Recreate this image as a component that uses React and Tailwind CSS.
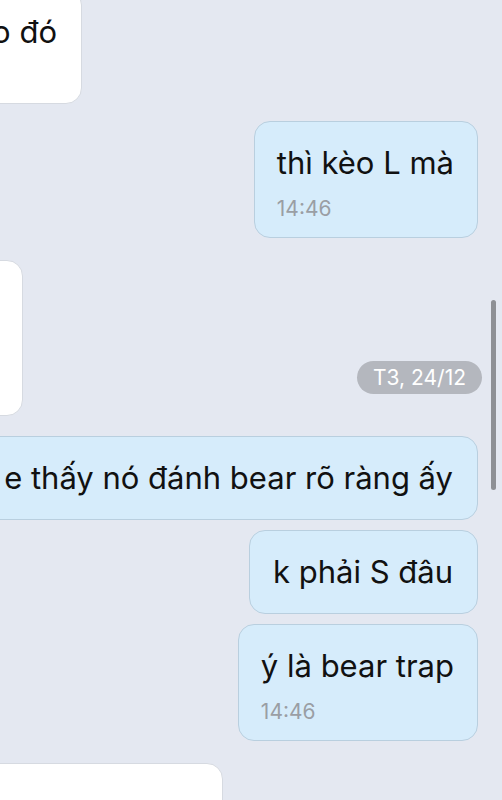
export default function App() {
  const font = { fontFamily: 'Inter, "Noto Sans", sans-serif' };
  return (
    <div
      className="relative w-full h-[800px] overflow-hidden bg-[#e4e8f1] flex flex-col pr-[24px] text-[#111111]"
      style={font}
    >
      {/* top white bubble (cut off left) */}
      <div className="flex justify-start">
        <div className="-mt-[11px] -ml-[218px] w-[300px] shrink-0 bg-white border border-[#d6dae1] rounded-[16px] pt-[22px] pb-[51px] pr-[24px] text-right text-[31px] leading-[40px]">
          o đó
        </div>
      </div>

      {/* thì kèo L mà */}
      <div className="flex justify-end mt-[17px]">
        <div className="bg-[#d6ecfb] border border-[#b9cfdf] rounded-[16px] pt-[21px] pb-[16px] pl-[22px] pr-[23px]">
          <div className="text-[31px] leading-[40px] whitespace-nowrap">thì kèo L mà</div>
          <div className="mt-[14px] text-[21px] leading-[24px] text-[#9a9ea4]">14:46</div>
        </div>
      </div>

      {/* white bubble + date pill */}
      <div className="flex justify-between mt-[22px]">
        <div className="-ml-[77px] w-[100px] h-[156px] shrink-0 bg-white border border-[#d6dae1] rounded-[16px]" />
        <div className="self-end mb-[22px] -mr-[4px] h-[33px] px-[16px] rounded-full bg-[#b4b7be] text-white text-[21px] leading-[33px] whitespace-nowrap">
          T3, 24/12
        </div>
      </div>

      {/* e thấy nó ... */}
      <div className="flex justify-end mt-[20px]">
        <div className="shrink-0 bg-[#d6ecfb] border border-[#b9cfdf] rounded-[16px] py-[21px] pl-[23px] pr-[24px] text-[31px] leading-[40px] whitespace-nowrap">
          e thấy nó đánh bear rõ ràng ấy
        </div>
      </div>

      {/* k phải S đâu */}
      <div className="flex justify-end mt-[10px]">
        <div className="bg-[#d6ecfb] border border-[#b9cfdf] rounded-[16px] py-[21px] pl-[23px] pr-[24px] text-[31px] leading-[40px] whitespace-nowrap">
          k phải S đâu
        </div>
      </div>

      {/* ý là bear trap */}
      <div className="flex justify-end mt-[10px]">
        <div className="bg-[#d6ecfb] border border-[#b9cfdf] rounded-[16px] pt-[21px] pb-[16px] pl-[22px] pr-[23px]">
          <div className="text-[31px] leading-[40px] whitespace-nowrap">ý là bear trap</div>
          <div className="mt-[14px] text-[21px] leading-[24px] text-[#9a9ea4]">14:46</div>
        </div>
      </div>

      {/* bottom white bubble */}
      <div className="flex justify-start mt-[22px]">
        <div className="-ml-[77px] w-[300px] h-[120px] shrink-0 bg-white border border-[#d6dae1] rounded-[16px]" />
      </div>

      {/* scrollbar */}
      <div className="absolute left-[491px] top-[300px] w-[5px] h-[190px] rounded-full bg-[#8e9095]" />
    </div>
  );
}
